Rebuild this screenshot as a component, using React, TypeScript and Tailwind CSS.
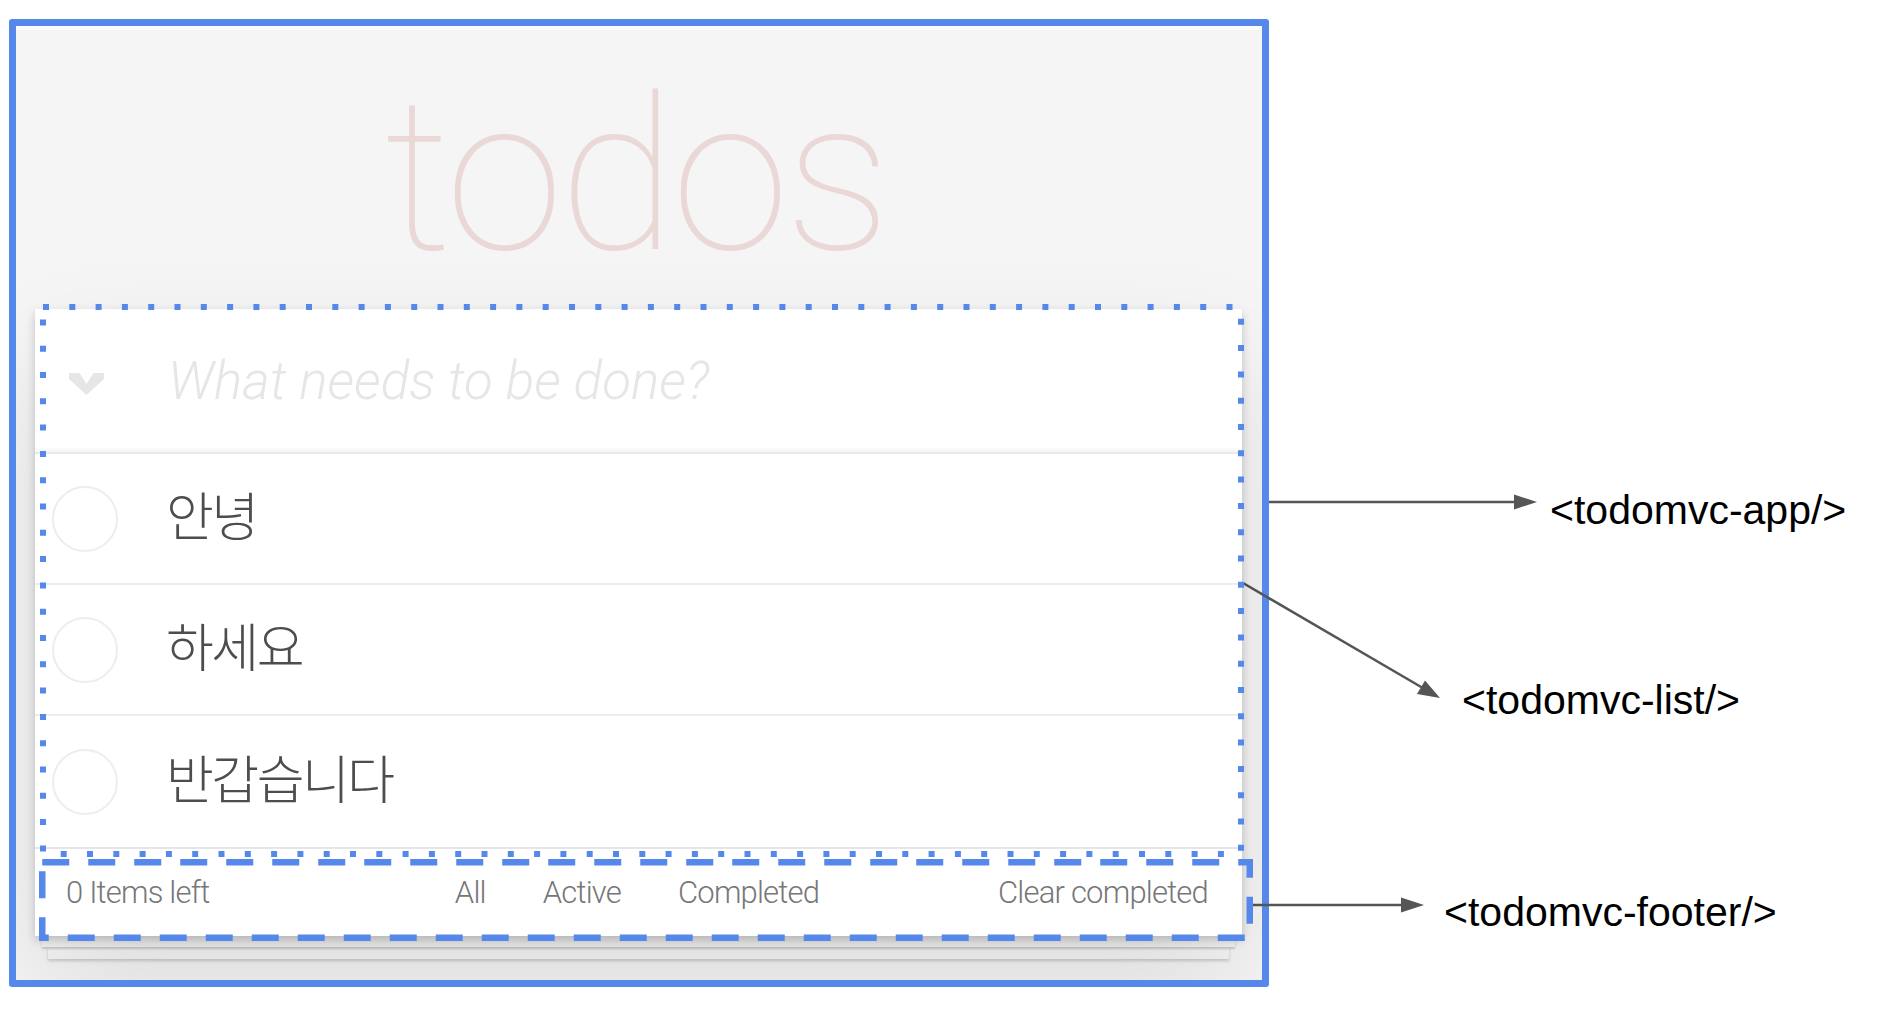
import React from "react";

function Chevron() {
  return (
    <svg width="36" height="22" viewBox="0 0 36 22" className="block">
      <polygon points="0,0 10.5,0 17.5,11 24.5,0 35,0 35,6 17.5,22 0,6" fill="#e6e6e6" />
    </svg>
  );
}

function TodoRow({ text, last }: { text: string; last?: boolean }) {
  return (
    <li
      className={
        "flex items-center h-[131px] pl-[17px] " +
        (last ? "" : "border-b-2 border-[#ededed]")
      }
    >
      <div className="w-[66px] h-[66px] rounded-full border-2 border-[#ededed] shrink-0" />
      <span className="ml-[48px] text-[52px] leading-none font-light tracking-[-2.5px] text-[#4d4d4d] font-['Roboto','Noto_Sans_CJK_KR',sans-serif]">
        {text}
      </span>
    </li>
  );
}

export default function App() {
  return (
    <div className="relative w-[1894px] h-[1014px] bg-white overflow-hidden font-['Roboto',sans-serif]">
      {/* todomvc-app frame */}
      <div className="ml-[9px] mt-[19px] w-[1260px] h-[968px] border-[7px] border-[#5688ec] rounded-[3px] bg-[#f5f5f5] overflow-hidden flex flex-col">
        <div className="h-[4px] bg-[#fbfbfb] shrink-0" />
        <div className="pl-[19px] pr-[20px] flex flex-col">
          <h1 className="h-[279px] pt-[39px] pr-[6px] text-center text-[214px] leading-none font-thin tracking-[-4.5px] text-[#ead8d7] font-['Roboto',sans-serif]">
            todos
          </h1>

          <section className="relative z-10 bg-white shadow-[0_4px_9px_rgba(0,0,0,0.2),0_55px_110px_rgba(0,0,0,0.1)]">
            {/* todomvc-list dotted outline */}
            <svg
              className="absolute left-[5px] top-[-5px] z-20 pointer-events-none"
              width="1204"
              height="553"
              viewBox="0 0 1204 553"
            >
              <rect
                x="3"
                y="3"
                width="1198"
                height="547"
                fill="none"
                stroke="#5688ec"
                strokeWidth="6"
                strokeDasharray="6 20.3"
              />
            </svg>

            <header className="h-[145px] flex items-center border-b-2 border-[#e9e9e9] shadow-[inset_0_-4px_2px_rgba(0,0,0,0.03)]">
              <div className="w-[133px] shrink-0 flex pl-[34px] pt-[6px]">
                <Chevron />
              </div>
              <input
                className="flex-1 bg-transparent outline-none text-[53px] leading-none font-light italic text-[#4d4d4d] placeholder:text-[#e6e6e6] placeholder:italic font-['Roboto',sans-serif]"
                placeholder="What needs to be done?"
              />
            </header>

            <ul>
              <TodoRow text="안녕" />
              <TodoRow text="하세요" />
              <TodoRow text="반갑습니다" last />
            </ul>

            {/* todomvc-footer */}
            <footer className="relative h-[89px] border-t-2 border-[#e6e6e6] grid grid-cols-[1fr_auto_1fr] items-center pl-[31px] pr-[34px] text-[31px] leading-none font-light tracking-[-0.8px] text-[#777]">
              <span>0 Items left</span>
              <div className="flex gap-[57px]">
                <span>All</span>
                <span>Active</span>
                <span>Completed</span>
              </div>
              <span className="text-right">Clear completed</span>
              <svg
                className="absolute left-[4px] top-[10px] z-20 pointer-events-none"
                width="1214"
                height="82"
                viewBox="0 0 1214 82"
              >
                <rect
                  x="3.25"
                  y="3.25"
                  width="1207.5"
                  height="75.5"
                  fill="none"
                  stroke="#5688ec"
                  strokeWidth="6.5"
                  strokeDasharray="27 19"
                />
              </svg>
            </footer>
          </section>

          <div className="relative z-[5] mx-[7px] h-[11px] bg-[#f6f6f6] shadow-[0_2px_2px_rgba(0,0,0,0.18)]" />
          <div className="relative z-[4] mx-[13px] h-[12px] bg-[#f6f6f6] shadow-[0_2px_3px_rgba(0,0,0,0.18)]" />
        </div>
      </div>

      {/* annotation arrows */}
      <svg className="absolute left-0 top-0 pointer-events-none" width="1894" height="1014" viewBox="0 0 1894 1014">
        <g stroke="#555" strokeWidth="2.5" fill="#555">
          <line x1="1269" y1="502" x2="1516" y2="502" />
          <polygon points="1514,494.5 1537,502 1514,509.5" stroke="none" />
          <line x1="1243" y1="583" x2="1422" y2="687.5" />
          <polygon points="1417,694 1440,698 1425,680.5" stroke="none" />
          <line x1="1253" y1="905" x2="1403" y2="905" />
          <polygon points="1401,897.5 1424,905 1401,912.5" stroke="none" />
        </g>
      </svg>

      <div className="absolute left-[1550px] top-[490px] text-[41px] leading-none text-black font-['Liberation_Sans',Arial,sans-serif]">
        &lt;todomvc-app/&gt;
      </div>
      <div className="absolute left-[1462px] top-[680px] text-[41px] leading-none text-black font-['Liberation_Sans',Arial,sans-serif]">
        &lt;todomvc-list/&gt;
      </div>
      <div className="absolute left-[1444px] top-[892px] text-[41px] leading-none text-black font-['Liberation_Sans',Arial,sans-serif]">
        &lt;todomvc-footer/&gt;
      </div>
    </div>
  );
}
